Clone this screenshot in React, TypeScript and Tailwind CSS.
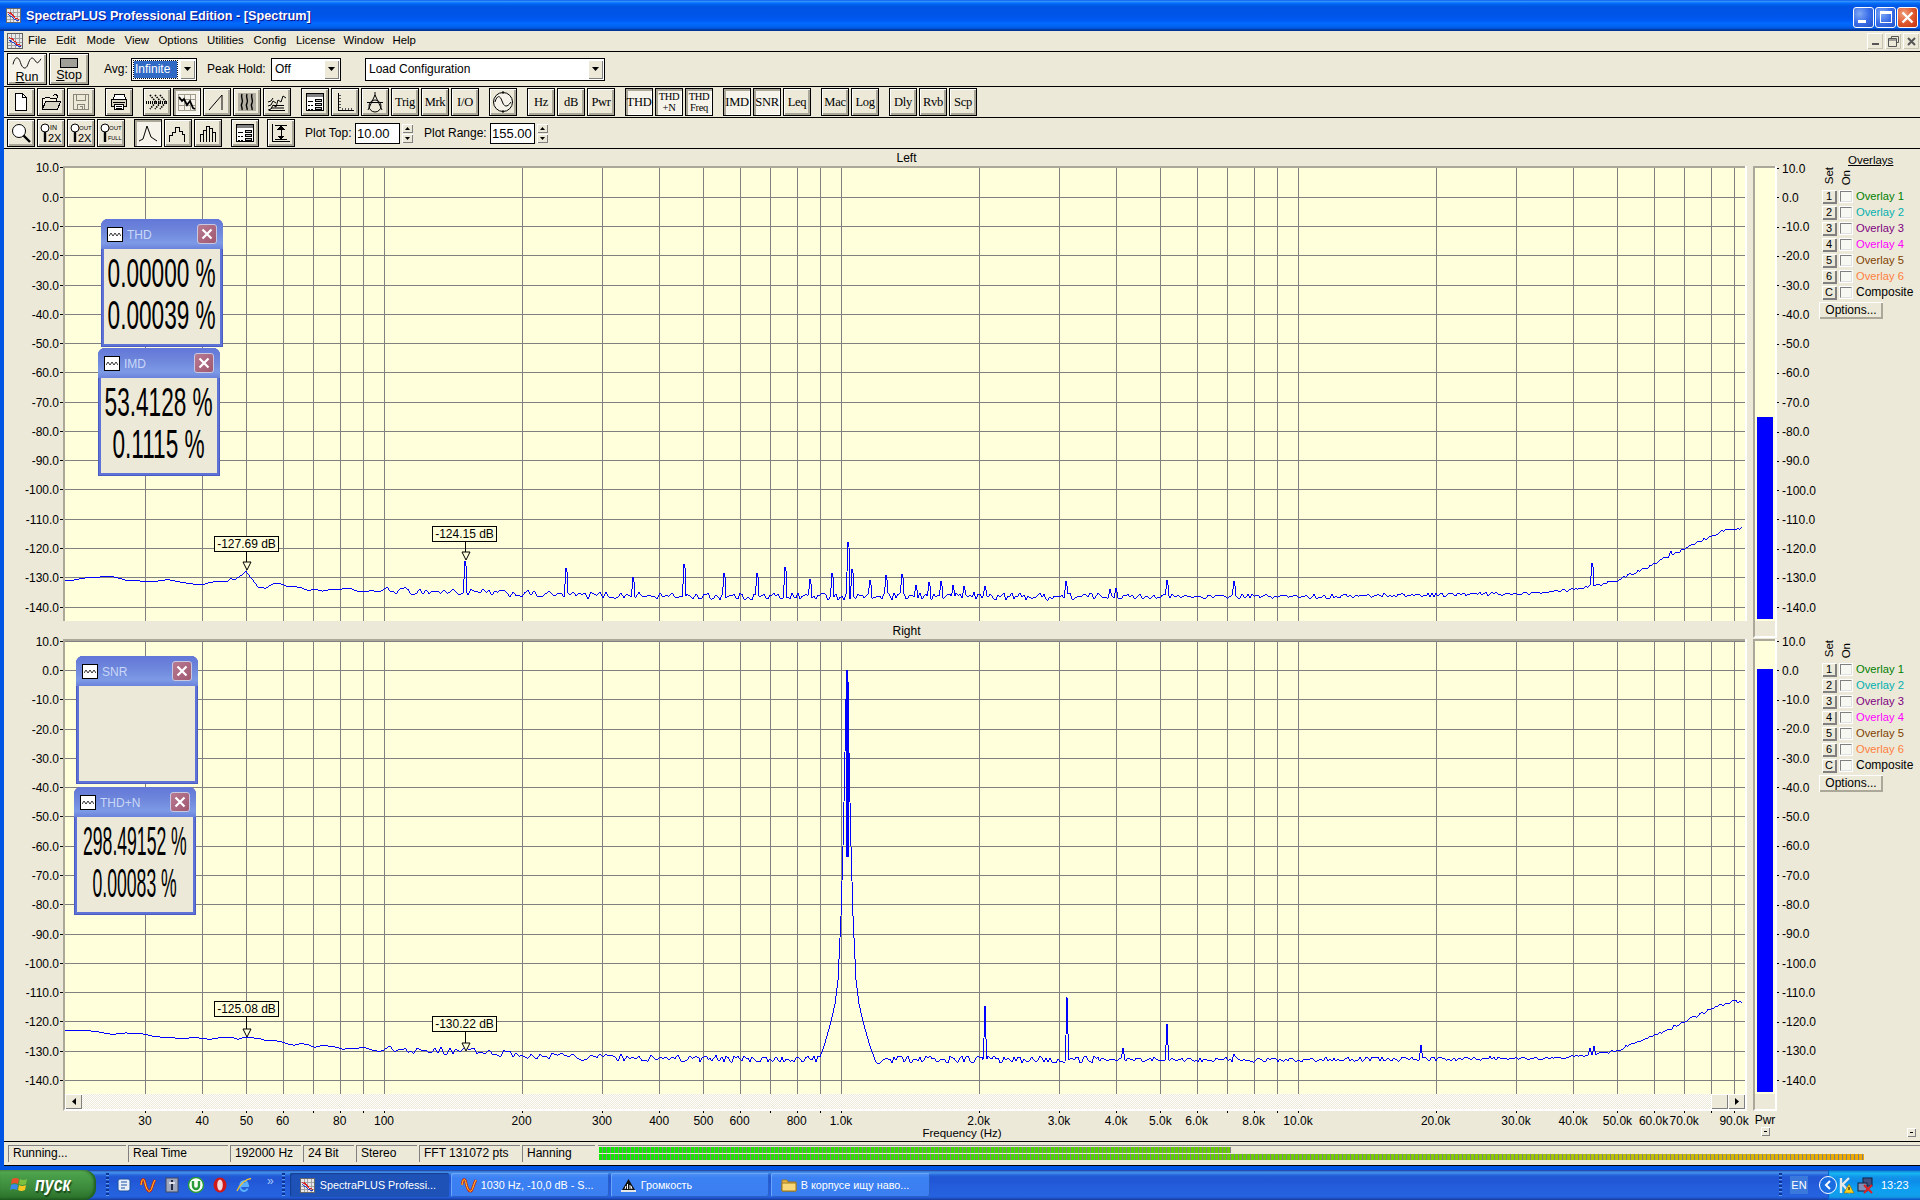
import React from "react";

const FONT = "font-['Liberation_Sans',Arial,sans-serif]";

/* ---------- chart maths ---------- */
const X0 = 384;
const DEC = 457;
const fx = (f: number) => X0 + DEC * Math.log10(f / 100);

function rng(seed: number) {
  let s = seed >>> 0;
  return () => {
    s = (s + 0x6d2b79f5) >>> 0;
    let t = s;
    t = Math.imul(t ^ (t >>> 15), t | 1);
    t ^= t + Math.imul(t ^ (t >>> 7), t | 61);
    return ((t ^ (t >>> 14)) >>> 0) / 4294967296;
  };
}
function interp(table: number[][], x: number) {
  if (x <= table[0][0]) return table[0][1];
  for (let i = 1; i < table.length; i++) {
    if (x <= table[i][0]) {
      const [a, b] = table[i - 1];
      const [c, d] = table[i];
      return b + ((d - b) * (x - a)) / (c - a);
    }
  }
  return table[table.length - 1][1];
}

const floorL = [
  [65, -130.5], [120, -130.2], [165, -131], [205, -132], [215, -131.3], [235, -131], [246, -127.7], [258, -133.3], [280, -132.5],
  [300, -134], [340, -134.3], [384, -134.5], [460, -135], [560, -136], [700, -136.5], [1300, -136.5], [1510, -135.6], [1573, -134], [1590, -133],
  [1617, -131], [1653, -125.5], [1684, -120], [1720, -114.5], [1734, -113], [1743, -113.5],
];
const floorR = [
  [65, -123], [120, -124], [200, -125.5], [246, -125.5], [300, -128], [384, -129.5], [465, -130], [520, -131.5], [640, -132.5], [800, -133],
  [1300, -133], [1550, -132.5], [1590, -131.5], [1620, -129.5], [1653, -125], [1684, -120], [1720, -114.5], [1734, -113], [1743, -113.5],
];
const peaksL: number[][] = [
  [464.5, -124.5], [566, -126.8], [633, -130], [684, -125.4], [724, -128.5], [757, -128.5], [785, -126.5], [810, -130.7], [832, -128.5],
  [847.5, -118], [852, -127], [870, -131], [886, -129.3], [902, -128.8], [916, -132.7], [929, -131.5], [941, -131.3], [953, -132.7], [964, -133],
  [974, -135], [985, -133], [1066, -131.3], [1110, -134], [1116, -133.5], [1167, -131], [1234, -131.3], [1592, -125], [1671, -121], [1711, -118],
];
const peaksR: number[][] = [
  [985, -114.7], [1066.5, -111.6], [1123, -129], [1167, -121], [1234, -131], [1326, -132], [1421, -128], [1590, -129], [1594, -128.5],
];
const skirt = [[0, 0], [1, -10], [2, -28], [3, -45], [4, -60], [6, -84], [9, -106], [12, -114], [16, -120], [20, -125], [24, -129.5], [28, -133], [40, -160]];

function tracePath(ch: "L" | "R", y10: number) {
  const rand = rng(ch === "L" ? 1234 : 9876);
  const Y = (db: number) => Math.round(y10 + (10 - db) * 2.928);
  const table = ch === "L" ? floorL : floorR;
  const peaks = ch === "L" ? peaksL : peaksR;
  const pts: string[] = [];
  let prevN = 0;
  let nextN = 0;
  for (let x = 65; x <= 1742; x++) {
    const bucket = x < 230 ? 14 : x < 384 ? 7 : x < 700 ? 3 : 2;
    if (x % bucket === 0 || x === 65) {
      prevN = nextN;
      nextN = (rand() - 0.5) * 2;
    }
    const t = (x % bucket) / bucket;
    const nv = prevN + (nextN - prevN) * t;
    const amp = x < 384 ? 0.7 : x < 1100 ? 1.25 : x < 1500 ? 0.75 : 0.5;
    const fl = interp(table, x) + nv * amp;
    let v = fl;
    for (const [px, top] of peaks) {
      const d = x - Math.round(px);
      if (d === 0) v = Math.max(v, top);
      else if (d === 1) v = Math.max(v, ch === "L" ? top - 1.5 : fl + (top - fl) * 0.42);
      else if (d === -1) v = Math.max(v, fl + (top - fl) * 0.42);
    }
    if (ch === "R") {
      const d = Math.abs(x - 847);
      if (d < 40) v = Math.max(v, interp(skirt, d));
    }
    pts.push(`${x},${Y(v)}`);
  }
  return "M" + pts.join("L");
}

const gridF: number[] = [];
[10, 100, 1000, 10000].forEach((m) => [2, 3, 4, 5, 6, 7, 8, 9, 10].forEach((k) => gridF.push(m * k)));
const gridX = gridF.filter((f) => f > 25 && f < 95000).map((f) => Math.round(fx(f)) + 0.5);
const dbs = Array.from({ length: 16 }, (_, i) => 10 - i * 10);
const fmt = (d: number) => d.toFixed(1);

const xLabels: [number, string][] = [
  [30, "30"], [40, "40"], [50, "50"], [60, "60"], [80, "80"], [100, "100"], [200, "200"], [300, "300"], [400, "400"], [500, "500"], [600, "600"], [800, "800"],
  [1000, "1.0k"], [2000, "2.0k"], [3000, "3.0k"], [4000, "4.0k"], [5000, "5.0k"], [6000, "6.0k"], [8000, "8.0k"], [10000, "10.0k"], [20000, "20.0k"], [30000, "30.0k"],
  [40000, "40.0k"], [50000, "50.0k"], [60000, "60.0k"], [70000, "70.0k"], [90000, "90.0k"],
];

type Mk = { x: number; bx: number; by: number; tip: number; label: string };

function Chart({ top, h, y10, ch, marks, plotBottom }: { top: number; h: number; y10: number; ch: "L" | "R"; marks: Mk[]; plotBottom: number }) {
  const Y = (db: number) => Math.round(y10 + (10 - db) * 2.928);
  return (
    <svg width={1745} height={h} viewBox={`4 ${top} 1745 ${h}`} className="block text-[12px] overflow-visible" shapeRendering="crispEdges">
      <rect x={65} y={top} width={1680} height={plotBottom - top} fill="#ffffdc" />
      {gridX.map((x) => (
        <line key={x} x1={x} x2={x} y1={top} y2={plotBottom} stroke="#808080" />
      ))}
      {dbs.map((d) => {
        const y = Math.round(y10 + (10 - d) * 2.928) + 0.5;
        return (
          <g key={d}>
            <line x1={65} x2={1745} y1={y} y2={y} stroke="#808080" />
            <line x1={60} x2={63} y1={y} y2={y} stroke="#000" />
            <text x={59} y={y + 4} textAnchor="end" fill="#000" shapeRendering="auto">
              {fmt(d)}
            </text>
          </g>
        );
      })}
      <path d={tracePath(ch, y10)} fill="none" stroke="#0000ff" strokeWidth={1} />
      {ch === "R" && <rect x={846} y={Y(-4)} width={3} height={Y(-64) - Y(-4)} fill="#0000ff" />}
      {marks.map((m) => (
        <g key={m.label}>
          <line x1={m.x + 0.5} x2={m.x + 0.5} y1={m.by + 16} y2={m.tip} stroke="#000" />
          <path d={`M${m.x - 3} ${m.tip}h8l-4 8z`} fill="#ffffdc" stroke="#000" shapeRendering="auto" />
          <rect x={m.bx + 0.5} y={m.by + 0.5} width={64} height={15} fill="#ffffdc" stroke="#000" />
          <text x={m.bx + 32.5} y={m.by + 12} textAnchor="middle" fill="#000" shapeRendering="auto">
            {m.label}
          </text>
        </g>
      ))}
      <rect x={63} y={top} width={1682} height={2} fill="#aca899" />
      <rect x={63} y={top} width={2} height={plotBottom - top} fill="#aca899" />
      <rect x={1745} y={top} width={2} height={plotBottom - top} fill="#ffffff" />
    </svg>
  );
}

/* ---------- icons ---------- */
const Ico = ({ children, s = 22 }: { children: React.ReactNode; s?: number }) => (
  <svg width={s} height={s} viewBox="0 0 22 22" fill="none" stroke="#000" strokeWidth={1} shapeRendering="crispEdges">
    {children}
  </svg>
);
const AppIcon = ({ s = 16 }: { s?: number }) => (
  <svg width={s} height={s} viewBox="0 0 16 16" shapeRendering="crispEdges">
    <rect x="0.5" y="0.5" width="15" height="15" fill="#e8e8e8" stroke="#606060" />
    <path d="M4.5 1v14M8.5 1v14M12 1v14M1 5h14M1 9h14M1 12.5h14" stroke="#a0a0a0" />
    <path d="M2 4l2 2 1-1 2 3 2 1 1 3 2-1 2 2" fill="none" stroke="#e02020" strokeWidth="1.2" />
    <path d="M2 7l3 2 2 1 2 2 2 1 3 1" fill="none" stroke="#2040d0" strokeWidth="1" />
  </svg>
);
const Sine = ({ s = 16 }: { s?: number }) => (
  <svg width={s} height={s} viewBox="0 0 16 16">
    <path d="M1 8C2 1 4 1 5 6s3 9 5 8 2-6 5-11" fill="none" stroke="#d02000" strokeWidth="2.6" />
    <path d="M1 8C2 1 4 1 5 6s3 9 5 8 2-6 5-11" fill="none" stroke="#ffe040" strokeWidth="1" />
  </svg>
);
const TableIcon = () => (
  <Ico>
    <rect x="2.5" y="2.5" width="17" height="17" fill="#fff" />
    <rect x="3" y="3" width="16" height="3" fill="#808080" stroke="none" />
    <path d="M11.5 8.5h6v2h-6zM11.5 12.5h6v2h-6zM11.5 16.5h6v2h-6z" fill="#c0c0c0" />
    <path d="M4 10h5M4 14h2M7 14h2M4 18h2M7 18h2" />
  </Ico>
);

const toolIcons: Record<string, React.ReactNode> = {
  new: (
    <Ico>
      <path d="M5.5 2.5h7l4 4v13h-11z" fill="#fff" />
      <path d="M12.5 2.5v4h4" />
    </Ico>
  ),
  open: (
    <Ico>
      <path d="M2.5 18.5v-11h2l1-1h4l1 1h6v3" fill="#f5f0e0" />
      <path d="M2.5 18.5l3-8h15l-3 8z" fill="#d8d4c4" />
      <path d="M13 5l2-2 3 2-1 2" />
    </Ico>
  ),
  save: (
    <Ico>
      <g stroke="#8a8778">
        <path d="M3.5 3.5h15v15h-15z" />
        <path d="M6.5 3.5v6h9v-6M7.5 18.5v-5h7v5M10 15h2v3" />
      </g>
    </Ico>
  ),
  print: (
    <Ico>
      <path d="M6.5 3.5h10l1 5h-12z" fill="#fff" />
      <path d="M3.5 8.5h15v7h-15z" fill="#d8d4c4" />
      <path d="M6.5 13.5h9v5h-9z" fill="#fff" />
      <path d="M5 11h12M8 15.5h6M8 17h6" />
    </Ico>
  ),
  fwd: (
    <Ico>
      <path d="M0 11h21" strokeWidth="3" strokeDasharray="1 1" />
      <path d="M4 4l6 7-6 7M9 4l6 7-6 7M14 4l6 7-6 7" strokeWidth="1.6" strokeDasharray="1.5 1" shapeRendering="auto" />
    </Ico>
  ),
  grid: (
    <Ico>
      <path d="M2.5 3.5h17v16h-17zM8.5 3.5v16M14.5 3.5v16M2.5 8.5h17M2.5 14.5h17" stroke="#a09c8c" />
      <path d="M3 6l3 4 2-2 3 6 3-4 3 7 2 1" strokeWidth="1.8" shapeRendering="auto" />
    </Ico>
  ),
  saw: (
    <Ico>
      <path d="M3 19L16 4v15" shapeRendering="auto" />
    </Ico>
  ),
  water: (
    <Ico>
      <rect x="2" y="2" width="18" height="18" fill="#b4b0a4" stroke="none" />
      <path d="M6 3c-2 4 2 6 0 9s1 5 0 7M11 3c-2 4 2 6 0 9s1 5 0 7M16 3c-2 4 2 6 0 9s1 5 0 7" strokeWidth="1.4" shapeRendering="auto" />
    </Ico>
  ),
  stack: (
    <Ico>
      <path d="M2 19l3-1 2-4 3 2 2-7 3 2 2-6 3 2M2 15l3-1 2-4 3 2M2 11l3-1 2-3M3 19.5h16M5 17h13M7 14.5h11" shapeRendering="auto" />
    </Ico>
  ),
  table: <TableIcon />,
  axes: (
    <Ico>
      <path d="M4.5 2v17.5H20" />
      <path d="M5 4h2M5 7h2M5 10h2M5 13h2M5 16h2M8 17v2M11 17v2M14 17v2M17 17v2" stroke="#555" />
    </Ico>
  ),
  comp: (
    <Ico>
      <path d="M11 1v4M11 4L4 19M11 4l7 15" shapeRendering="auto" />
      <path d="M3 11h16" />
      <circle cx="11" cy="15" r="6" shapeRendering="auto" />
    </Ico>
  ),
  sinec: (
    <Ico>
      <circle cx="11" cy="11" r="9.5" fill="#f5f3ea" shapeRendering="auto" />
      <path d="M11 0v3M11 19v3M3 11c2-7 5-7 7-1s5 7 9 1" shapeRendering="auto" />
    </Ico>
  ),
  zoom: (
    <Ico>
      <circle cx="9" cy="9" r="6.5" fill="#fff" shapeRendering="auto" />
      <path d="M13.5 13.5l6.5 6.5" strokeWidth="2.4" shapeRendering="auto" />
    </Ico>
  ),
  zin: (
    <svg width="24" height="24" viewBox="0 0 24 24">
      <circle cx="6" cy="7" r="4" fill="#fff" stroke="#000" />
      <path d="M6 11v10" stroke="#000" strokeWidth="2.4" />
      <text x="11" y="9" fill="#000" fontSize="7">IN</text>
      <text x="9" y="21" fill="#000" fontSize="11">2X</text>
    </svg>
  ),
  zout: (
    <svg width="24" height="24" viewBox="0 0 24 24">
      <circle cx="6" cy="7" r="4" fill="#fff" stroke="#000" />
      <path d="M6 11v10" stroke="#000" strokeWidth="2.4" />
      <text x="10" y="9" fill="#000" fontSize="6">OUT</text>
      <text x="9" y="21" fill="#000" fontSize="11">2X</text>
    </svg>
  ),
  zfull: (
    <svg width="24" height="24" viewBox="0 0 24 24">
      <circle cx="6" cy="7" r="4" fill="#fff" stroke="#000" />
      <path d="M6 11v10" stroke="#000" strokeWidth="2.4" />
      <text x="10" y="9" fill="#000" fontSize="6">OUT</text>
      <text x="9" y="19" fill="#000" fontSize="5.5">FULL</text>
    </svg>
  ),
  peak: (
    <Ico>
      <path d="M2 19l4-2 4-13 4 11 6 4" shapeRendering="auto" />
    </Ico>
  ),
  step: (
    <Ico>
      <path d="M2.5 19.5v-6h3v-3h3v-5h4v4h3v3h2v7" />
    </Ico>
  ),
  bars: (
    <Ico>
      <path d="M3.5 19.5v-7h3v7M6.5 19.5v-11h3v11M9.5 19.5v-15h3v15M12.5 19.5v-13h3v13M15.5 19.5v-9h3v9" />
    </Ico>
  ),
  range: (
    <Ico>
      <path d="M2.5 2v17.5H20M5 3.5h12M5 17.5h12M11 4v13" />
      <path d="M8 7l3-3 3 3zM8 14l3 3 3-3z" fill="#000" />
    </Ico>
  ),
};

const raised = "border border-black bg-[#ece9d8] shadow-[inset_1px_1px_0_#fff,inset_-2px_-2px_0_#aca899]";
const down = "border border-black bg-[#f5f3ea] shadow-[inset_2px_2px_0_#aca899,inset_-1px_-1px_0_#fff]";

function TB({ icon, label, label2, on, small }: { icon?: string; label?: string; label2?: string; on?: boolean; small?: boolean }) {
  return (
    <div className={`w-[28px] h-[28px] shrink-0 flex flex-col items-center justify-center ${on ? down : raised}`}>
      {icon ? (
        toolIcons[icon]
      ) : (
        <span className={`font-['Liberation_Serif',serif] text-black whitespace-nowrap leading-[11px] text-center tracking-[-0.3px] ${small ? "text-[10.5px]" : "text-[12.5px]"}`}>
          {label}
          {label2 && <span className="block">{label2}</span>}
        </span>
      )}
    </div>
  );
}

function Group({ children }: { children: React.ReactNode }) {
  return <div className="flex gap-[2px]">{children}</div>;
}

function Combo({ className, text, selected }: { className: string; text: string; selected?: boolean }) {
  return (
    <div className={`h-[23px] bg-white border border-black flex items-center pl-[2px] pr-[1px] text-[12px] text-black ${className}`}>
      <span className={`flex-1 h-[17px] leading-[17px] pl-[1px] whitespace-nowrap ${selected ? "bg-[#316ac5] text-white outline-1 outline-dotted outline-[#111]" : ""}`}>{text}</span>
      <div className="w-[15px] h-[19px] ml-[3px] bg-[#ece9d8] shadow-[inset_1px_1px_0_#fff,inset_-1px_-1px_0_#808080] flex items-center justify-center">
        <svg width="7" height="4" viewBox="0 0 7 4">
          <path d="M0 0h7L3.5 4z" fill="#000" />
        </svg>
      </div>
    </div>
  );
}

function Spin() {
  const c = "w-[11px] h-[9px] bg-[#ece9d8] shadow-[inset_1px_1px_0_#fff,inset_-1px_-1px_0_#808080] flex items-center justify-center";
  return (
    <div className="flex flex-col gap-[1px] ml-[2px]">
      <div className={c}>
        <svg width="5" height="3" viewBox="0 0 5 3">
          <path d="M0 3h5L2.5 0z" fill="#000" />
        </svg>
      </div>
      <div className={c}>
        <svg width="5" height="3" viewBox="0 0 5 3">
          <path d="M0 0h5L2.5 3z" fill="#000" />
        </svg>
      </div>
    </div>
  );
}

/* ---------- floating meter windows ---------- */
function Meter({ pos, title, lines, squeeze }: { pos: string; title: string; lines: string[]; squeeze: string }) {
  return (
    <div className={`absolute ${pos} w-[122px] h-[128px] rounded-t-[7px] bg-[#5f72d6] flex flex-col px-[3px] pb-[3px] shadow-[inset_0_0_0_1px_#4a5cc4]`}>
      <div className="h-[30px] shrink-0 flex items-center -mx-[3px] px-[6px] rounded-t-[7px] [background:linear-gradient(180deg,#6277d8_0%,#7088dc_45%,#7d9ae6_80%,#6b82da_100%)]">
        <div className="w-[16px] h-[15px] bg-white border border-black flex items-center justify-center">
          <svg width="12" height="7" viewBox="0 0 12 7">
            <path d="M0 5l2-3 2 3 2-3 2 3 2-3 2 3" fill="none" stroke="#333" />
          </svg>
        </div>
        <span className="ml-[4px] mt-[2px] text-[12px] text-[#c9d8f7] flex-1 whitespace-nowrap">{title}</span>
        <div className="w-[20px] h-[20px] rounded-[3px] border border-[#c8c8e0] [background:linear-gradient(135deg,#b87a92,#a05870)] flex items-center justify-center">
          <svg width="12" height="12" viewBox="0 0 12 12">
            <path d="M1.5 1.5l9 9M10.5 1.5l-9 9" stroke="#fff" strokeWidth="2.2" />
          </svg>
        </div>
      </div>
      <div className="flex-1 bg-[#ece9d8] flex flex-col items-center pt-[3px] text-black overflow-hidden">
        {lines.map((l) => (
          <div key={l} className="h-[42px] leading-[42px] text-[40px] whitespace-nowrap">
            <span className={`inline-block ${squeeze}`}>{l}</span>
          </div>
        ))}
      </div>
    </div>
  );
}

/* ---------- right side of plots ---------- */
function PowerBar({ bar }: { bar: string }) {
  return (
    <div className="ml-[4px] w-[24px] h-[472px] shrink-0 border-l-2 border-[#aca899] border-r-2 border-r-white border-b-2 border-b-white flex flex-col">
      <div className="h-[455px] bg-[#ffffdc] border-t-2 border-[#aca899] flex flex-col justify-end px-[2px] pb-[2px]">
        <div className={`bg-[#0000ff] ${bar}`} />
      </div>
    </div>
  );
}
function Scale() {
  return (
    <div className="w-[42px] shrink-0 -mt-[12px]">
      {dbs.map((d) => (
        <div key={d} className="h-[29.28px] flex items-center text-[12px] text-black">
          <span className="w-[2px] h-px bg-black shrink-0" />
          <span className="ml-[3px]">{fmt(d)}</span>
        </div>
      ))}
    </div>
  );
}
const ovl: [string, string, string, string][] = [
  ["1", "Overlay 1", "text-[#008000]", "text-[11.2px]"],
  ["2", "Overlay 2", "text-[#00b0b0]", "text-[11.2px]"],
  ["3", "Overlay 3", "text-[#800080]", "text-[11.2px]"],
  ["4", "Overlay 4", "text-[#ff00ff]", "text-[11.2px]"],
  ["5", "Overlay 5", "text-[#804000]", "text-[11.2px]"],
  ["6", "Overlay 6", "text-[#ff8040]", "text-[11.2px]"],
  ["C", "Composite", "text-black", "text-[12px]"],
];
function Overlays({ title }: { title?: boolean }) {
  return (
    <div className="w-[101px] shrink-0 -mt-[12px] flex flex-col text-black">
      <div className="h-[13px] text-[11.5px] leading-[13px] pl-[29px]">{title && <span className="underline">Overlays</span>}</div>
      <div className="h-[21px] flex items-start pl-[3px]">
        <div className="w-[14px] flex justify-center">
          <span className="[writing-mode:vertical-rl] rotate-180 text-[11.5px] leading-[14px]">Set</span>
        </div>
        <div className="w-[14px] ml-[3px] pt-[3px] flex justify-center">
          <span className="[writing-mode:vertical-rl] rotate-180 text-[11.5px] leading-[14px]">On</span>
        </div>
      </div>
      {ovl.map(([n, t, c, sz]) => (
        <div key={n} className="h-[16px] flex items-center pl-[3px]">
          <div className="w-[14px] h-[13px] bg-[#ece9d8] shadow-[inset_1px_1px_0_#fff,inset_-1px_-1px_0_#808080,1px_1px_0_#808080] text-[11px] leading-[13px] text-center">{n}</div>
          <div className="w-[14px] h-[13px] ml-[3px] bg-white p-[1px]">
            <div className="w-full h-full bg-[#f8f8f2] border border-[#808080] border-b-[#e0e0e0] border-r-[#e0e0e0]" />
          </div>
          <span className={`ml-[3px] whitespace-nowrap ${c} ${sz}`}>{t}</span>
        </div>
      ))}
      <div className="w-[64px] h-[17px] bg-[#ece9d8] shadow-[inset_1px_1px_0_#fff,inset_-2px_-2px_0_#aca899] text-[12px] leading-[16px] text-center mt-[2px]">Options...</div>
    </div>
  );
}

const SmallBtn = () => (
  <div className="w-[9px] h-[9px] bg-[#ece9d8] shadow-[inset_1px_1px_0_#fff,inset_-1px_-1px_0_#808080] flex items-center justify-center">
    <span className="w-[3px] h-px bg-black" />
  </div>
);

/* ---------- task bar ---------- */
const TaskBtn = ({ active, icon, text, w }: { active?: boolean; icon: React.ReactNode; text: string; w: string }) => (
  <div
    className={`${w} h-[24px] rounded-[2px] flex items-center pl-[10px] text-white text-[10.8px] whitespace-nowrap overflow-hidden ${
      active ? "bg-[#1e52b7] shadow-[inset_1px_1px_1px_#163f8f]" : "[background:linear-gradient(180deg,#4f93f5,#3c81f3_20%,#3a7ef0)] shadow-[inset_1px_1px_0_#6ca4f8,inset_-1px_-1px_0_#2a60c8]"
    }`}
  >
    <span className="w-[16px] h-[16px] flex items-center justify-center shrink-0 mr-[4px]">{icon}</span>
    {text}
  </div>
);
const Grip = () => (
  <div className="w-[3px] h-[24px] shrink-0 [background:repeating-linear-gradient(180deg,#0c3494_0_2px,#5a9af0_2px_3px,transparent_3px_4px)]" />
);

const WinBtn = ({ close, children }: { close?: boolean; children: React.ReactNode }) => (
  <div
    className={`w-[21px] h-[21px] rounded-[3px] border border-white flex items-center justify-center ${
      close ? "[background:radial-gradient(circle_at_30%_30%,#f0a080,#e05a30_50%,#c03010)]" : "[background:radial-gradient(circle_at_30%_30%,#7fa8f5,#3a6ee8_50%,#2050c8)]"
    }`}
  >
    {children}
  </div>
);
const MdiBtn = ({ children }: { children: React.ReactNode }) => (
  <div className="w-[16px] h-[16px] bg-[#ece9d8] shadow-[inset_1px_1px_0_#fff,inset_-1px_-1px_0_#c8c4b4] flex items-center justify-center">{children}</div>
);

export default function App() {
  const menus = ["File", "Edit", "Mode", "View", "Options", "Utilities", "Config", "License", "Window", "Help"];
  const menuPos = ["w-[28px]", "w-[30.5px]", "w-[38px]", "w-[34px]", "w-[48.5px]", "w-[46.5px]", "w-[42.5px]", "w-[47.5px]", "w-[49px]", "w-[30px]"];
  return (
    <div className={`${FONT} w-[1920px] h-[1200px] overflow-hidden flex flex-col bg-[#ece9d8] text-black`}>
      {/* title bar */}
      <div className="h-[31px] shrink-0 flex items-center pl-[6px] pr-[2px] [background:linear-gradient(180deg,#0058e6_0%,#3a93ff_4%,#288eff_6%,#127dff_8%,#036ffc_10%,#0262ee_14%,#0057e5_20%,#0054e3_24%,#0055eb_56%,#005bf5_66%,#026afe_76%,#0062ef_86%,#0052d6_92%,#0040ab_94%,#003092_100%)]">
        <AppIcon s={15} />
        <span className="ml-[5px] mt-[3px] text-white font-bold text-[12.7px] flex-1 whitespace-nowrap [text-shadow:1px_1px_#0f1089]">SpectraPLUS Professional Edition - [Spectrum]</span>
        <div className="flex gap-[1px] mt-[3px]">
          <WinBtn>
            <span className="w-[8px] h-[3px] bg-white mt-[9px] -ml-[3px]" />
          </WinBtn>
          <WinBtn>
            <span className="w-[12px] h-[12px] border border-white border-t-[3px]" />
          </WinBtn>
          <WinBtn close>
            <svg width="13" height="13" viewBox="0 0 13 13">
              <path d="M1.5 1.5l10 10M11.5 1.5l-10 10" stroke="#fff" strokeWidth="2.4" />
            </svg>
          </WinBtn>
        </div>
      </div>

      <div className="h-[1135px] shrink-0 border-l-4 border-[#0055e5] flex flex-col relative">
        {/* menu */}
        <div className="h-[21px] shrink-0 border-b border-black flex items-center pl-[3px] text-[11.4px]">
          <AppIcon s={16} />
          <div className="flex ml-[5px]">
            {menus.map((m, i) => (
              <span key={m} className={menuPos[i]}>
                {m}
              </span>
            ))}
          </div>
          <div className="ml-auto flex gap-[2px] pr-[1px]">
            <MdiBtn>
              <span className="w-[7px] h-[2px] bg-[#555] mt-[5px]" />
            </MdiBtn>
            <MdiBtn>
              <svg width="11" height="11" viewBox="0 0 11 11">
                <path d="M3.5 2.5v-2h7v6h-2M.5 2.5h8v8h-8zM.5 4h8" fill="none" stroke="#555" />
              </svg>
            </MdiBtn>
            <MdiBtn>
              <svg width="9" height="9" viewBox="0 0 9 9">
                <path d="M1 1l7 7M8 1l-7 7" stroke="#555" strokeWidth="2" />
              </svg>
            </MdiBtn>
          </div>
        </div>

        {/* toolbar 1 */}
        <div className="h-[35px] shrink-0 border-b border-black flex items-center pl-[3px] text-[12px]">
          <div className={`w-[40px] h-[32px] flex flex-col items-center -mt-[1px] ${raised} bg-[#f5f3ea]`}>
            <svg width="30" height="14" viewBox="0 0 32 15" className="mt-[2px]">
              <path d="M1 9C3 0 7 0 9 7s6 8 8 2 4-9 7-5 3 5 7-1" fill="none" stroke="#000" />
            </svg>
            <span className="leading-[13px] text-[12.5px] mt-[1px]">
              <span className="underline">R</span>un
            </span>
          </div>
          <div className={`w-[40px] h-[32px] ml-[2px] flex flex-col items-center -mt-[1px] ${raised}`}>
            <div className="w-[18px] h-[10px] mt-[4px] bg-[#a0a098] border border-black" />
            <span className="leading-[13px] mt-[1px] text-[12.5px]">
              <span className="underline">S</span>top
            </span>
          </div>
          <span className="ml-[15px] w-[27px]">Avg:</span>
          <Combo className="w-[66px]" text="Infinite" selected />
          <span className="ml-[10px] w-[64px] whitespace-nowrap">Peak Hold:</span>
          <Combo className="w-[70px]" text="Off" />
          <Combo className="w-[240px] ml-[24px]" text="Load Configuration" />
        </div>

        {/* toolbar 2 */}
        <div className="h-[31px] shrink-0 border-b border-black flex items-center gap-[10px] pl-[3px]">
          <Group>
            <TB icon="new" />
            <TB icon="open" />
            <TB icon="save" />
          </Group>
          <Group>
            <TB icon="print" />
          </Group>
          <Group>
            <TB icon="fwd" />
            <TB icon="grid" on />
            <TB icon="saw" />
            <TB icon="water" />
            <TB icon="stack" />
          </Group>
          <Group>
            <TB icon="table" />
            <TB icon="axes" />
            <TB icon="comp" />
            <TB label="Trig" />
            <TB label="Mrk" />
            <TB label="I/O" />
          </Group>
          <Group>
            <TB icon="sinec" />
          </Group>
          <Group>
            <TB label="Hz" />
            <TB label="dB" />
            <TB label="Pwr" />
          </Group>
          <Group>
            <TB label="THD" on />
            <TB label="THD" label2="+N" small on />
            <TB label="THD" label2="Freq" small on />
          </Group>
          <Group>
            <TB label="IMD" on />
            <TB label="SNR" on />
            <TB label="Leq" />
          </Group>
          <Group>
            <TB label="Mac" />
            <TB label="Log" />
          </Group>
          <Group>
            <TB label="Dly" />
            <TB label="Rvb" />
            <TB label="Scp" />
          </Group>
        </div>

        {/* toolbar 3 */}
        <div className="h-[31px] shrink-0 border-b border-black flex items-center pl-[3px] text-[12px]">
          <Group>
            <TB icon="zoom" />
            <TB icon="zin" />
            <TB icon="zout" />
            <TB icon="zfull" />
          </Group>
          <div className="ml-[9px]">
            <Group>
              <TB icon="peak" on />
              <TB icon="step" />
              <TB icon="bars" />
            </Group>
          </div>
          <div className="ml-[9px]">
            <TB icon="table" />
          </div>
          <div className="ml-[8px]">
            <TB icon="range" />
          </div>
          <span className="ml-[10px] w-[50px] whitespace-nowrap">Plot Top:</span>
          <div className="w-[45px] h-[21px] bg-white border border-black text-[13px] leading-[19px] pl-[1px]">10.00</div>
          <Spin />
          <span className="ml-[11px] w-[66px] whitespace-nowrap">Plot Range:</span>
          <div className="w-[45px] h-[21px] bg-white border border-black text-[13px] leading-[19px] pl-[1px]">155.00</div>
          <Spin />
        </div>

        {/* client */}
        <div className="relative flex-1 flex flex-col">
          <div className="h-[17px] shrink-0 w-[1745px] pl-[60px] text-center text-[12px] leading-[19px]">Left</div>
          <div className="flex h-[473px] shrink-0">
            <div className="w-[1745px] shrink-0 flex flex-col">
              <Chart
                top={166}
                h={457}
                y10={167.4}
                plotBottom={621}
                ch="L"
                marks={[
                  { x: 246, bx: 214, by: 536, tip: 562, label: "-127.69 dB" },
                  { x: 465, bx: 432, by: 526, tip: 552, label: "-124.15 dB" },
                ]}
              />
              <div className="h-[16px] pl-[60px] text-center text-[12px] leading-[16px]">Right</div>
            </div>
            <PowerBar bar="h-[202px]" />
            <Scale />
            <Overlays title />
          </div>
          <div className="flex h-[501px] shrink-0">
            <div className="w-[1745px] shrink-0 flex flex-col">
              <Chart
                top={639}
                h={455}
                y10={640.8}
                plotBottom={1094}
                ch="R"
                marks={[
                  { x: 246, bx: 214, by: 1001, tip: 1029, label: "-125.08 dB" },
                  { x: 465, bx: 432, by: 1016, tip: 1043, label: "-130.22 dB" },
                ]}
              />
              {/* scroll bar */}
              <div className="ml-[59px] w-[1684px] h-[17px] flex border-l-2 border-[#aca899] border-r-2 border-r-white border-b-2 border-b-white">
                <div className="w-[17px] h-full bg-[#ece9d8] shadow-[inset_1px_1px_0_#fff,inset_-1px_-1px_0_#808080] flex items-center justify-center">
                  <svg width="4" height="7" viewBox="0 0 4 7">
                    <path d="M4 0v7L0 3.5z" fill="#000" />
                  </svg>
                </div>
                <div className="flex-1 [background:repeating-conic-gradient(#ece9d8_0_25%,#ffffff_0_50%)_0_0/2px_2px]" />
                <div className="w-[17px] h-full bg-[#ece9d8] shadow-[inset_1px_1px_0_#fff,inset_-1px_-1px_0_#808080]" />
                <div className="w-[17px] h-full bg-[#ece9d8] shadow-[inset_1px_1px_0_#fff,inset_-1px_-1px_0_#808080] flex items-center justify-center">
                  <svg width="4" height="7" viewBox="0 0 4 7">
                    <path d="M0 0v7l4-3.5z" fill="#000" />
                  </svg>
                </div>
              </div>
              {/* x axis */}
              <svg width={1745} height={29} viewBox="4 1111 1745 29" className="block text-[12px]">
                {gridX.map((x) => (
                  <line key={x} x1={x} x2={x} y1={1110} y2={1113} stroke="#000" shapeRendering="crispEdges" />
                ))}
                {xLabels.map(([f, t]) => (
                  <text key={t} x={fx(f)} y={1125} textAnchor="middle" fill="#000">
                    {t}
                  </text>
                ))}
                <text x={962} y={1137} textAnchor="middle" fill="#000" fontSize="11.5">
                  Frequency (Hz)
                </text>
              </svg>
            </div>
            <div className="shrink-0 flex flex-col items-center">
              <PowerBar bar="h-[423px]" />
              <span className="text-[12px] leading-[16px] mt-[1px] ml-[4px]">Pwr</span>
              <div className="ml-[4px] -mt-[1px]">
                <SmallBtn />
              </div>
            </div>
            <Scale />
            <div className="flex flex-col">
              <Overlays />
              <div className="mt-auto self-end mr-[4px] mb-[3px]">
                <SmallBtn />
              </div>
            </div>
          </div>

          <Meter pos="left-[97px] top-[70px]" title="THD" lines={["0.00000 %", "0.00039 %"]} squeeze="scale-x-[0.565]" />
          <Meter pos="left-[94px] top-[199px]" title="IMD" lines={["53.4128 %", "0.1115 %"]} squeeze="scale-x-[0.565]" />
          <Meter pos="left-[72px] top-[507px]" title="SNR" lines={[]} squeeze="scale-x-[0.565]" />
          <Meter pos="left-[70px] top-[638px]" title="THD+N" lines={["298.49152 %", "0.00083 %"]} squeeze="scale-x-[0.44]" />
        </div>

        {/* status bar */}
        <div className="h-[25px] shrink-0 border-t border-black border-b flex gap-[2px] pl-[4px] pt-[3px] text-[12px] leading-[15px]">
          {[
            ["w-[118px]", "Running..."],
            ["w-[100px]", "Real Time"],
            ["w-[71px]", "192000 Hz"],
            ["w-[51px]", "24 Bit"],
            ["w-[61px]", "Stereo"],
            ["w-[101px]", "FFT 131072 pts"],
            ["w-[73px]", "Hanning"],
          ].map(([w, t]) => (
            <div key={t} className={`${w} h-[17px] shrink-0 pl-[4px] whitespace-nowrap border-l border-t border-[#808080]`}>
              {t}
            </div>
          ))}
          <div className="flex-1 h-[17px] border-t border-[#808080] pl-[1px] pt-[1px] flex flex-col gap-[1px] ml-[1px]">
            <div className="w-[632px] h-[6px] [background:repeating-linear-gradient(90deg,transparent_0_3px,#808080_3px_4px),linear-gradient(90deg,#10e800,#66cc00)]" />
            <div className="w-[1265px] h-[6px] [background:repeating-linear-gradient(90deg,transparent_0_3px,#808080_3px_4px),linear-gradient(90deg,#10e800_0%,#66cc00_50%,#88c800_70%,#b8c000_80%,#f0a800_100%)]" />
          </div>
        </div>
      </div>

      <div className="h-[4px] shrink-0 bg-[#0055e5]" />

      {/* task bar */}
      <div className="h-[30px] shrink-0 flex items-center [background:linear-gradient(180deg,#1f2f86_0%,#3165c4_3%,#3682e5_6%,#4490e6_10%,#3883e5_12%,#2b71e0_15%,#2663da_18%,#235bd6_20%,#2258d5_23%,#2157d6_38%,#245ddb_54%,#2562df_86%,#245fdc_89%,#2158d4_92%,#1d4ec0_95%,#1941a5_98%)]">
        <div className="w-[96px] h-[30px] shrink-0 rounded-r-[12px] flex items-center pl-[10px] [background:linear-gradient(180deg,#5eac56_0%,#4aa04a_15%,#3c8a3c_60%,#2d742d_90%,#1e5a1e_100%)] shadow-[inset_-2px_0_3px_#1e5a1e]">
          <svg width="20" height="18" viewBox="0 0 20 18" className="shrink-0">
            <path d="M2 3q4-2 7 0l-1 5q-3-2-7 0z" fill="#e8502a" />
            <path d="M10 3q3 2 7 0l-1 5q-4 2-7 0z" fill="#7cc040" />
            <path d="M1 9q3-2 7 0l-1 5q-4-2-7 0z" fill="#3a88e8" />
            <path d="M9 9q3 2 7 0l-1 5q-4 2-7 0z" fill="#f8c820" />
          </svg>
          <span className="ml-[5px] inline-block text-white font-bold italic text-[16px] scale-y-[1.25] [text-shadow:1px_1px_1px_#1a4a1a]">пуск</span>
        </div>
        <div className="ml-[10px]">
          <Grip />
        </div>
        <div className="ml-[7px] flex items-center gap-[8px]">
          <svg width="16" height="16" viewBox="0 0 16 16">
            <rect x="2" y="2" width="12" height="12" rx="2" fill="#e8eef8" stroke="#1a50a0" />
            <path d="M5 5h6M5 8h6M5 11h4" stroke="#1a50a0" />
          </svg>
          <Sine />
          <svg width="16" height="16" viewBox="0 0 16 16">
            <rect x="2" y="1" width="12" height="14" fill="#a0a8c0" stroke="#404860" />
            <rect x="7" y="3" width="2" height="10" fill="#202840" />
            <rect x="5" y="5" width="6" height="2" fill="#e0e0e8" />
          </svg>
          <svg width="16" height="16" viewBox="0 0 16 16">
            <circle cx="8" cy="8" r="7.5" fill="#f8fff8" stroke="#2a9a3a" strokeWidth="1.5" />
            <path d="M5 4v5a3 3 0 006 0V4" fill="none" stroke="#2a9a3a" strokeWidth="2.4" />
          </svg>
          <svg width="16" height="16" viewBox="0 0 16 16">
            <ellipse cx="8" cy="8" rx="6.5" ry="7.5" fill="#d01818" />
            <ellipse cx="8" cy="8" rx="2.8" ry="5.5" fill="#f4d8d8" />
          </svg>
          <svg width="16" height="16" viewBox="0 0 16 16">
            <path d="M13 9H4.5a3.6 3.6 0 107 2.5M4.5 7h7a3.6 3.6 0 00-7 0z" fill="none" stroke="#5ab0ff" strokeWidth="2" />
            <path d="M1 14C4 7 10 2 15 1.500" fill="none" stroke="#f0c030" strokeWidth="1.3" />
          </svg>
        </div>
        <span className="ml-[15px] text-[#a8c8f8] text-[12px] leading-none -mt-[8px]">»</span>
        <div className="ml-[8px]">
          <Grip />
        </div>
        <div className="ml-[5px] flex gap-[2px] items-center">
          <TaskBtn active w="w-[159px]" icon={<AppIcon s={15} />} text="SpectraPLUS Professi..." />
          <TaskBtn w="w-[158px]" icon={<Sine />} text="1030 Hz, -10,0 dB - S..." />
          <TaskBtn
            w="w-[158px]"
            icon={
              <svg width="15" height="13" viewBox="0 0 15 13">
                <path d="M7.5 0L14 11H1z" fill="#111" />
                <path d="M4 10l1-3M6.5 10V5M9 10V6M11 10l-1-3" stroke="#fff" />
                <rect x="0" y="11" width="15" height="2" fill="#e8e8e8" />
              </svg>
            }
            text="Громкость"
          />
          <TaskBtn
            w="w-[159px]"
            icon={
              <svg width="16" height="14" viewBox="0 0 16 14">
                <path d="M1 2h5l1 2h8v9H1z" fill="#e8b848" stroke="#a07820" />
                <path d="M1 5h14v8H1z" fill="#f8d878" stroke="#a07820" />
              </svg>
            }
            text="В корпусе ищу наво..."
          />
        </div>
        <div className="ml-auto flex items-center h-full">
          <Grip />
          <div className="ml-[8px] w-[18px] h-[18px] bg-[#3b78dc] text-white text-[11px] leading-[18px] text-center mr-[20px]">EN</div>
          <div className="relative w-[92px] h-full flex items-center pl-[9px] [background:linear-gradient(180deg,#0c59b9_0%,#139ee9_6%,#18b5f2_12%,#139beb_20%,#1290e8_28%,#0d8dea_38%,#0d9ff1_63%,#0f9eed_81%,#119be9_88%,#1392e2_91%,#137ed7_94%,#095bc9_97%)] shadow-[inset_1px_0_1px_#095bce]">
            <div className="absolute -left-[9px] top-[6px] w-[18px] h-[18px] rounded-full bg-[#1a6de0] border border-white flex items-center justify-center">
              <svg width="8" height="10" viewBox="0 0 8 10">
                <path d="M6 1L2 5l4 4" fill="none" stroke="#fff" strokeWidth="2" />
              </svg>
            </div>
            <svg width="17" height="17" viewBox="0 0 17 17" className="shrink-0 ml-[1px]">
              <path d="M3 1v15M3 9l8-8M5 8l7 8" stroke="#e8e8e8" strokeWidth="2.4" fill="none" />
              <path d="M11 7l5 9H6z" fill="#f8d020" stroke="#806000" strokeWidth="0.5" />
              <rect x="10.5" y="10" width="1" height="3" fill="#000" />
            </svg>
            <svg width="17" height="17" viewBox="0 0 17 17" className="shrink-0 ml-[2px]">
              <rect x="6" y="1" width="9" height="8" fill="#405080" stroke="#102040" />
              <rect x="1" y="6" width="9" height="8" fill="#8090b8" stroke="#102040" />
              <path d="M7 8l8 8M15 8l-8 8" stroke="#e02020" strokeWidth="2" />
            </svg>
            <span className="ml-[7px] text-white text-[11px]">13:23</span>
          </div>
        </div>
      </div>
    </div>
  );
}
